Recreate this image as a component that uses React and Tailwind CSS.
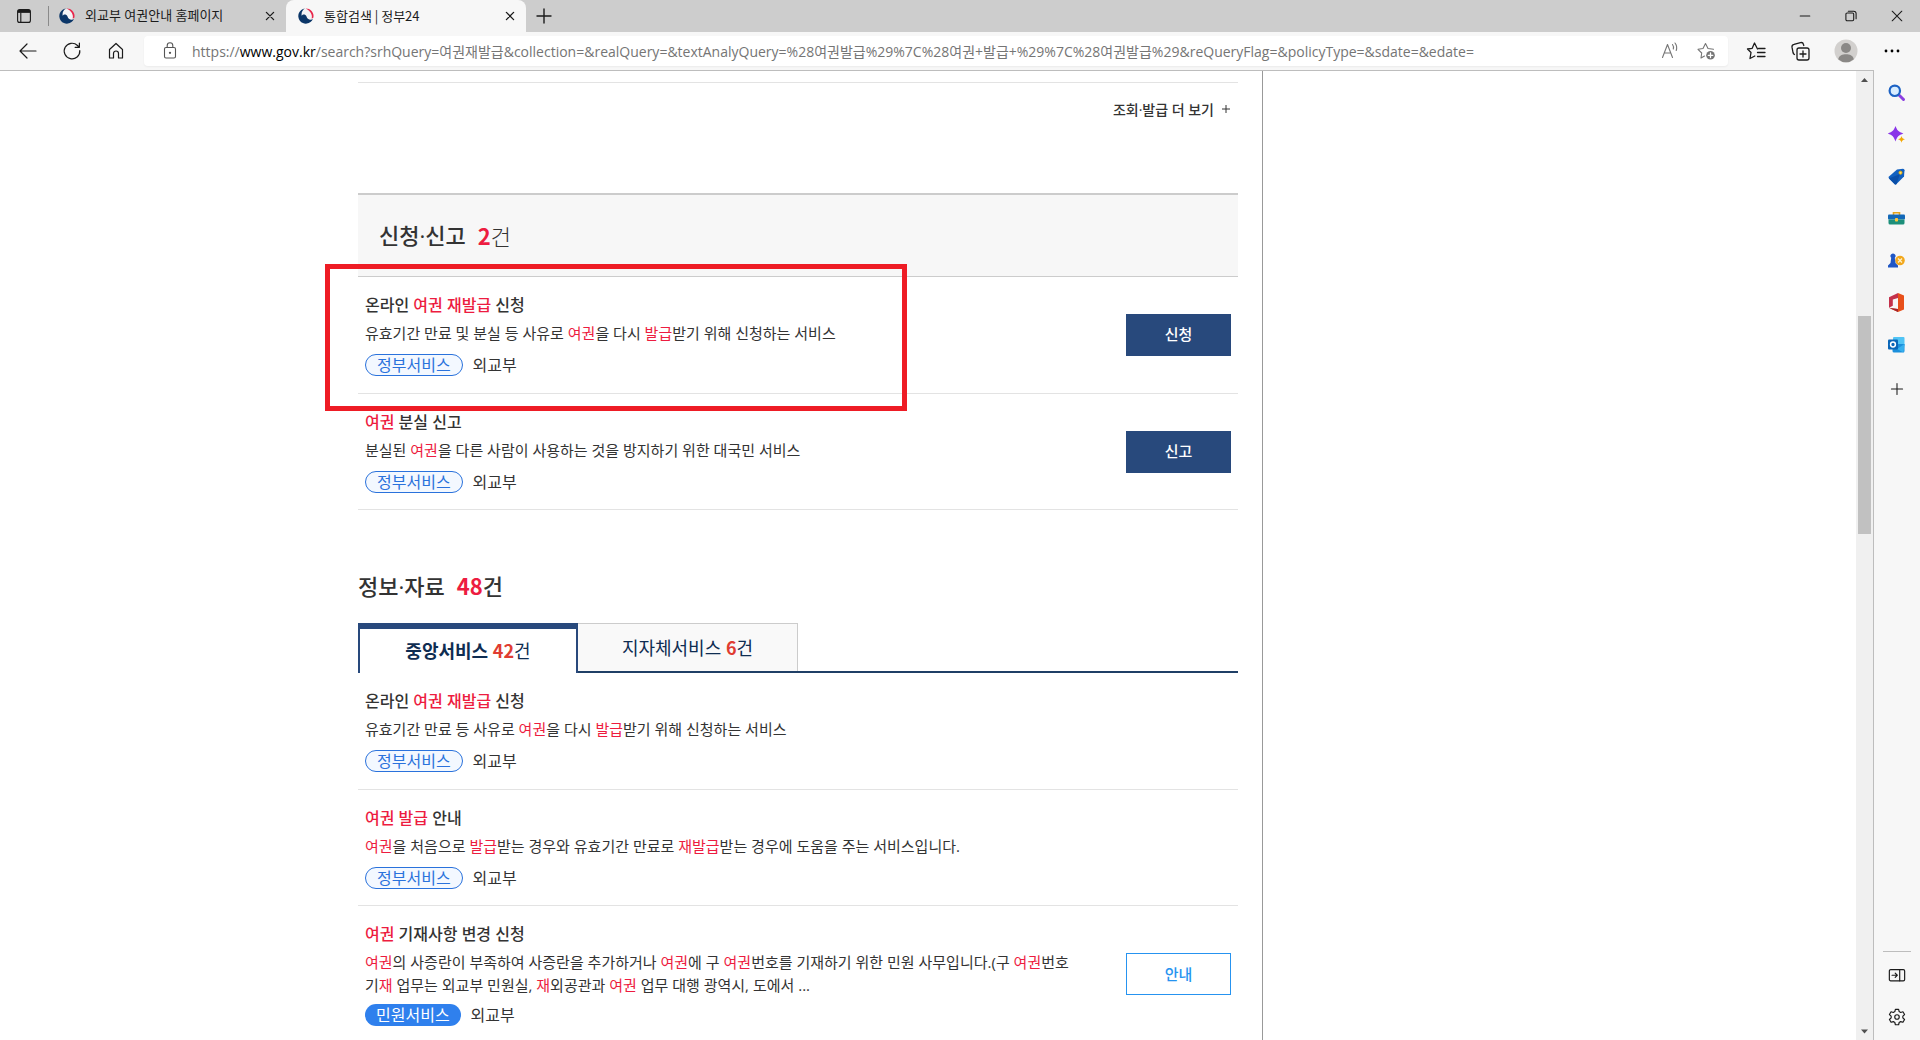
function Emblem() {
  return (
    <svg viewBox="0 0 16 16" className="size-4 shrink-0" aria-hidden="true">
      <circle cx="8.300" cy="7.800" r="6.800" fill="#f4f4f6" />
      <path d="M7.600.400A7.600 7.600 0 0 1 15.300 9.800C14.900 10.300 14.200 10.500 13.600 10.400 14.800 6.300 12 2.400 7.600.400Z" fill="#e8274b" />
      <path d="M6.900.500A7.600 7.600 0 1 0 14.900 11C13.300 12.200 11.300 11.900 9.900 10.700 8.300 9.300 8.800 7.400 7 6.700 5.600 6.200 4.300 6.800 3.700 7.700 3.100 4.600 4.400 2 6.900.500Z" fill="#0b3668" />
    </svg>
  );
}

function Icon({ size = "size-5", sw = 1.2, children, color = "#1b1b1b" }) {
  return (
    <svg viewBox="0 0 20 20" className={size + " shrink-0"} fill="none" stroke={color} strokeWidth={sw} strokeLinecap="round" strokeLinejoin="round" aria-hidden="true">
      {children}
    </svg>
  );
}

function CloseMark() {
  return <Icon size="size-3" sw={2.2}><path d="M4 4 16 16M16 4 4 16" /></Icon>;
}

function TabStrip() {
  return (
    <header className="flex h-8 shrink-0 items-stretch bg-[#cdcdcd] text-[13px] text-[#1b1b1b]">
      <button aria-label="탭 작업 메뉴" className="flex w-12 items-center justify-center">
        <Icon size="size-4" sw={1.4}>
          <rect x="2" y="2" width="16" height="16" rx="2.500" />
          <path d="M2.500 4.300h15" strokeWidth="3.600" strokeLinecap="butt" />
          <path d="M6 6v12" />
        </Icon>
      </button>
      <div className="my-1.5 w-px bg-[#8a8a8a]" />
      <div className="flex w-[237px] items-center gap-2.5 pr-1.5 pl-2.5">
        <Emblem />
        <span className="flex-1 truncate">외교부 여권안내 홈페이지</span>
        <button aria-label="외교부 여권안내 홈페이지 닫기" className="p-1"><CloseMark /></button>
      </div>
      <div className='flex w-[240px] items-center gap-2.5 rounded-t-lg bg-[#f7f7f7] pr-1.5 pl-3 font-["Noto_Sans_CJK_KR",sans-serif]'>
        <Emblem />
        <span className="flex-1 truncate">통합검색 | 정부24</span>
        <button aria-label="통합검색 닫기" className="p-1"><CloseMark /></button>
      </div>
      <button aria-label="새 탭" className="flex w-9 items-center justify-center"><Icon sw={1.4}><path d="M10 3v14M3 10h14" /></Icon></button>
      <div className="flex-1" />
      <button aria-label="최소화" className="flex w-[46px] items-center justify-center"><Icon size="size-3" sw={1.8}><path d="M2 10h16" /></Icon></button>
      <button aria-label="이전 크기로" className="flex w-[46px] items-center justify-center">
        <Icon size="size-3" sw={1.8}><rect x="1.500" y="5" width="13" height="13" rx="2" /><path d="M5.500 2h9a4 4 0 0 1 4 4v8.500" /></Icon>
      </button>
      <button aria-label="닫기" className="flex w-[46px] items-center justify-center"><Icon size="size-3" sw={1.8}><path d="M2 2 18 18M18 2 2 18" /></Icon></button>
    </header>
  );
}

function Toolbar() {
  return (
    <nav className="flex h-[38px] shrink-0 items-center bg-[#f7f7f7] pr-2 pl-2">
      <button aria-label="뒤로" className="flex w-10 justify-center"><Icon><path d="M18 10H2M9 3 2 10l7 7" /></Icon></button>
      <button aria-label="새로 고침" className="ml-1 flex w-10 justify-center"><Icon><path d="M17.800 9.500A7.800 7.800 0 1 1 15.500 4.500L17 6M17.400 2v4.300h-4.300" /></Icon></button>
      <button aria-label="홈" className="ml-1 flex w-10 justify-center"><Icon><path d="M3.500 8.500 10 2.500l6.500 6V17h-4v-4.500a2.500 2.500 0 0 0-5 0V17h-4Z" /></Icon></button>
      <div className="ml-2 flex h-[30px] flex-1 items-center rounded bg-white pr-3 pl-4 shadow-xs">
        <Icon size="size-5" color="#555" sw={1.1}><rect x="4.500" y="6.500" width="11" height="10.500" rx="1.500" /><path d="M7.200 6.500V4.600a2.800 2.800 0 0 1 5.600 0v1.900" /><circle cx="10" cy="11.800" r=".6" fill="#555" /></Icon>
        <div className="ml-3 flex-1 truncate text-[14px] text-[#757575]">
          https://<span className="text-black">www.gov.kr</span>/search?srhQuery=여권재발급&amp;collection=&amp;realQuery=&amp;textAnalyQuery=%28여권발급%29%7C%28여권+발급+%29%7C%28여권발급%29&amp;reQueryFlag=&amp;policyType=&amp;sdate=&amp;edate=
        </div>
        <button aria-label="소리내어 읽기">
          <Icon color="#767676" sw={1.1}><path d="M2.500 16.500 7.500 3.500l5 13M4.300 12h6.400M12.500 3.500a5 5 0 0 1 .8 4.500M15 2a8 8 0 0 1 1.200 7.500" /></Icon>
        </button>
        <button aria-label="즐겨찾기에 추가" className="ml-4">
          <Icon color="#767676" sw={1.1}>
            <path d="M5 17 5.700 12 2 8.300 7 7.500 9.500 2.500 12 7.500 17.500 8.300M5 17 8.500 15" />
            <circle cx="14.500" cy="14.300" r="4.300" fill="#767676" stroke="none" />
            <path d="M14.500 12v4.600M12.200 14.300h4.600" stroke="#fff" strokeWidth="1.300" />
          </Icon>
        </button>
      </div>
      <button aria-label="즐겨찾기" className="ml-[18px]">
        <Icon sw={1.3}><path d="M11.500 8 8.500 2 6.200 7.300 1.500 8 5 11.500 4 17.500 8.800 15M12.500 7.500H19M11.500 11.500H19M11.500 15.500H19" /></Icon>
      </button>
      <button aria-label="컬렉션" className="ml-6">
        <Icon sw={1.3}><rect x="7" y="7" width="12" height="12" rx="2" /><path d="M13 10v6M10 13h6M4.500 13.500A3 3 0 0 1 3 11.500L2 6.200A2.600 2.600 0 0 1 4 3.300L10.500 1.600A2.600 2.600 0 0 1 13.500 3.500L13.800 4.500" /></Icon>
      </button>
      <button aria-label="프로필" className="ml-6">
        <svg viewBox="0 0 24 24" className="size-6" aria-hidden="true">
          <circle cx="12" cy="12" r="11.500" fill="#d2d0ce" />
          <circle cx="12" cy="9" r="5" fill="#8a8886" />
          <path d="M4.200 20.300C5 16.500 8.500 15.300 12 15.300s7 1.200 7.800 5A11.500 11.500 0 0 1 4.200 20.300Z" fill="#8a8886" />
        </svg>
      </button>
      <button aria-label="설정 및 기타" className="ml-6 mr-2.5">
        <svg viewBox="0 0 20 20" className="size-5" aria-hidden="true"><circle cx="4" cy="10" r="1.400" /><circle cx="10" cy="10" r="1.400" /><circle cx="16" cy="10" r="1.400" /></svg>
      </button>
    </nav>
  );
}

const APPS = [
  ["검색", <><path d="M11.500 11.500 15.500 15.500" stroke="#8b3fe0" strokeWidth="3" strokeLinecap="round" /><circle cx="6.800" cy="6.800" r="5.200" fill="#d8edff" stroke="#1c62c4" strokeWidth="2.200" /></>],
  ["검색 도구", <><path d="M7.500 0C9.200 4.500 10.500 5.800 15.400 7.500 10.500 9.200 9.200 10.500 7.500 15.500 5.800 10.500 4.500 9.200-.2 7.500 4.500 5.800 5.800 4.500 7.500 0Z" fill="#8a35e8" /><path d="M13.500 10c.6 2 1.200 2.700 3.500 3.300-2.300.6-2.900 1.300-3.500 3.400-.6-2.100-1.200-2.800-3.500-3.400 2.300-.6 2.900-1.300 3.500-3.300Z" fill="#f5a800" /></>],
  ["쇼핑", <><path d="M9 1.500 15 .8Q16.500.8 16.500 2.300L16 8.500 8.500 16Q7.500 17 6.500 16L1 10.500Q0 9.500 1 8.500Z" fill="#1160c0" /><path d="M1 10.500 12 6l-3.500 10Q7.500 17 6.500 16Z" fill="#0a4ea8" /><circle cx="12.500" cy="4.700" r="1.500" fill="#ffe27a" stroke="#f0b000" /></>],
  ["도구", <><path d="M5.500 5V2.800h6V5" fill="none" stroke="#e3a21a" strokeWidth="1.600" /><rect x="0" y="4.500" width="17" height="5" rx="1" fill="#1368b8" /><path d="M.5 9.500h16V13a1.500 1.500 0 0 1-1.500 1.500H2A1.500 1.500 0 0 1 .5 13Z" fill="#1c8f7a" /><rect x="7" y="8" width="3" height="3.500" rx=".8" fill="#ffc83d" /></>],
  ["게임", <><circle cx="12" cy="8.500" r="4.800" fill="#f2a81d" /><path d="M10 6.500l4 4M14 6.500l-4 4" stroke="#fff3cf" strokeWidth="1.200" /><path d="M5 1.500a2.500 2.500 0 0 1 1.800 4.300L7.500 11 10 13.500V15.500H0V13.500L2.500 11 3.200 5.800A2.500 2.500 0 0 1 5 1.500Z" fill="#1f56c4" /></>],
  ["Office", <><path d="M10-1 1 3.200v10.600L4.800 11.800V5.500L10 4Z" fill="#c4314b" /><path d="M10-1 16 1.500v14L10 18 1.500 14.300 10 15Z" fill="#e8501a" /><path d="M1 13.800 10 18v-3Z" fill="#a3242f" /></>],
  ["Outlook", <><rect x="5" y="1" width="11.500" height="9" rx="1" fill="#50c4f5" /><path d="M4.500 8h12v7a1.500 1.500 0 0 1-1.500 1.500H6A1.500 1.500 0 0 1 4.500 15Z" fill="#1b8fdc" /><path d="M16.500 8 9 13l6.500 3.500Z" fill="#36b0ee" /><rect x="0" y="3.500" width="10" height="10" rx="1" fill="#0a66b8" /><circle cx="5" cy="8.500" r="2.400" fill="none" stroke="#fff" strokeWidth="1.500" /></>],
];

function Sidebar() {
  return (
    <aside className="flex w-[46px] shrink-0 flex-col items-center bg-[#f7f7f7] pt-px pb-0.5">
      {APPS.map(([name, art]) => (
        <button key={name} aria-label={name} className="flex h-[42px] w-full items-center justify-center pr-px">
          <svg viewBox="0 0 17 17" className="size-[17px] overflow-visible" aria-hidden="true">{art}</svg>
        </button>
      ))}
      <button aria-label="사용자 지정" className="flex h-12 w-full items-center justify-center"><Icon size="size-4" sw={1.3}><path d="M10 3v14M3 10h14" /></Icon></button>
      <div className="mt-auto h-px w-7 bg-[#bdbdbd]" />
      <button aria-label="사이드바 숨기기" className="mt-0.5 flex h-[42px] w-full items-center justify-center">
        <Icon size="size-[18px]" sw={1.3}><rect x="1.500" y="4" width="17" height="12.500" rx="1.500" /><path d="M13 4v12.500M4.500 10.300h5.500M8 8l2.300 2.300L8 12.600" /></Icon>
      </button>
      <button aria-label="설정" className="flex h-[42px] w-full items-center justify-center">
        <Icon size="size-[18px]" sw={1.3}>
          <path d="M8.200 1.500h3.600l.6 2.500 1.700 1 2.500-.8 1.800 3.100-1.900 1.800v1.900l1.900 1.800-1.800 3.100-2.500-.8-1.700 1-.6 2.500H8.200L7.600 16.100l-1.700-1-2.500.8-1.800-3.100 1.900-1.800V9.100L1.600 7.300l1.800-3.100 2.500.8 1.700-1Z" />
          <circle cx="10" cy="10" r="2.500" />
        </Icon>
      </button>
    </aside>
  );
}

function Scrollbar() {
  return (
    <div className="flex w-[17px] shrink-0 flex-col items-center bg-[#f0f0f0]" aria-hidden="true">
      <svg viewBox="0 0 17 17" className="size-[17px]"><path d="M5 11 8.500 7 12 11Z" fill="#505050" /></svg>
      <div className="flex w-[13px] flex-1 flex-col">
        <div className="flex-[228]" />
        <div className="flex-[218] bg-[#c1c1c1]" />
        <div className="flex-[490]" />
      </div>
      <svg viewBox="0 0 17 17" className="size-[17px]"><path d="M5 6.500 8.500 10.500 12 6.500Z" fill="#505050" /></svg>
    </div>
  );
}

/* Text between asterisks is a search hit and is drawn in red. */
function Hits({ text }) {
  return text.split("*").map((part, i) =>
    i % 2 ? <span key={i} className="text-[#ed1c40]">{part}</span> : <span key={i}>{part}</span>
  );
}

const ACTION = {
  solid: "bg-[#28497c] text-white",
  outline: "border border-[#2693f0] text-[#2693f0]",
};

function Result({ title, lines, civil, action, kind = "solid", marked }) {
  return (
    <li className="relative flex items-center border-b border-[#e3e3e3] pt-4 pr-[7px] pb-4 pl-[7px] first:pb-[17px]">
      <div className="flex-1">
        <h3 className="text-[16px] leading-6 font-medium"><a href="#result"><Hits text={title} /></a></h3>
        <p className="mt-[5px] text-[15px] leading-[23px]">
          {lines.map((line) => <span key={line} className="block"><Hits text={line} /></span>)}
        </p>
        <div className={civil ? "mt-[7px] flex items-center gap-2.5" : "mt-[9px] flex items-center gap-2.5"}>
          <span className={civil
            ? "flex h-[22px] items-center rounded-full bg-[#2f80ed] px-[11px] text-[16px] text-white"
            : "flex h-[22px] items-center rounded-full border border-[#2a72dc] bg-[#f3f8ff] px-[11px] text-[16px] text-[#2a72dc]"}>
            {civil ? "민원서비스" : "정부서비스"}
          </span>
          <span className="text-[16px] leading-[22px]">외교부</span>
        </div>
      </div>
      {action && <button className={"h-[42px] w-[105px] text-[15px] font-medium " + ACTION[kind]}>{action}</button>}
      {marked && <div className="pointer-events-none absolute -top-[13px] -left-[33px] z-10 h-[147px] w-[582px] border-[5px] border-[#ee1c25]" />}
    </li>
  );
}

function Count({ children, className = "text-[#ed1c40]" }) {
  return <span className={'font-bold font-["Noto_Sans_CJK_KR",sans-serif] ' + className}>{children}</span>;
}

function Results() {
  return (
    <main className="flex-1 overflow-hidden border-r border-[#999] pt-[11px] pr-6 pl-[358px] text-[#333]">
      <div className="flex h-[53px] items-center justify-end border-t border-[#e3e3e3] pr-2">
        <a href="#more" className="flex items-center gap-2 text-[14px] font-medium">
          조회·발급 더 보기
          <Icon size="size-2" sw={2.5} color="#333"><path d="M10 1v18M1 10h18" /></Icon>
        </a>
      </div>

      <section className="mt-[58px]">
        <h2 className="flex h-[84px] items-center border-t-2 border-b border-[#ccc] bg-[#f7f7f7] pl-[21px] text-[22px] font-medium">
          신청·신고<span className="ml-3"><Count>2</Count><span className="font-light">건</span></span>
        </h2>
        <ul>
          <Result marked title="온라인 *여권* *재발급* 신청" lines={["유효기간 만료 및 분실 등 사유로 *여권*을 다시 *발급*받기 위해 신청하는 서비스"]} action="신청" />
          <Result title="*여권* 분실 신고" lines={["분실된 *여권*을 다른 사람이 사용하는 것을 방지하기 위한 대국민 서비스"]} action="신고" />
        </ul>
      </section>

      <section className="mt-[59px]">
        <h2 className="mb-[21px] text-[22px] leading-8 font-medium">
          정보·자료<span className="ml-3"><Count>48</Count>건</span>
        </h2>
        <div role="tablist" className="flex h-[50px] text-[18px] text-[#0f2d52]">
          <button role="tab" aria-selected="true" className="w-[220px] border-x-2 border-t-[6px] border-[#28497c]">
            <span className="font-bold">중앙서비스</span> <Count className="text-[#e03c31]">42</Count>건
          </button>
          <div className="flex flex-1 border-b-2 border-[#1f3f66]">
            <button role="tab" aria-selected="false" className="w-[220px] border-t border-r border-[#ccc] bg-[#f9f9f9]">
              지자체서비스 <Count className="text-[#e03c31]">6</Count>건
            </button>
          </div>
        </div>
        <ul>
          <Result title="온라인 *여권* *재발급* 신청" lines={["유효기간 만료 등 사유로 *여권*을 다시 *발급*받기 위해 신청하는 서비스"]} />
          <Result title="*여권* *발급* 안내" lines={["*여권*을 처음으로 *발급*받는 경우와 유효기간 만료로 *재발급*받는 경우에 도움을 주는 서비스입니다."]} />
          <Result
            civil
            title="*여권* 기재사항 변경 신청"
            lines={[
              "*여권*의 사증란이 부족하여 사증란을 추가하거나 *여권*에 구 *여권*번호를 기재하기 위한 민원 사무입니다.(구 *여권*번호",
              "기*재* 업무는 외교부 민원실, *재*외공관과 *여권* 업무 대행 광역시, 도에서 ...",
            ]}
            action="안내"
            kind="outline"
          />
        </ul>
      </section>
    </main>
  );
}

export default function App() {
  return (
    <div className='flex h-screen flex-col overflow-hidden bg-white font-["Open_Sans","Noto_Sans_CJK_KR",sans-serif]'>
      <TabStrip />
      <Toolbar />
      <div className="flex min-h-0 flex-1">
        <div className="flex min-w-0 flex-1 border-t border-r border-[#bdbdbd]">
          <Results />
          <div className="w-[593px]" />
          <Scrollbar />
        </div>
        <Sidebar />
      </div>
    </div>
  );
}
